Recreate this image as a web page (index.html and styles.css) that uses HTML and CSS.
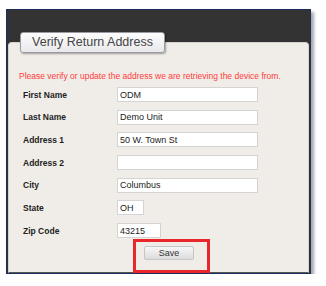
FILE: index.html
```html
<!DOCTYPE html>
<html lang="en">
<head>
    <meta charset="UTF-8">
    <meta name="viewport" content="width=device-width, initial-scale=1.0">
    <title>Verify Return Address</title>
    <link rel="stylesheet" href="styles.css">
</head>
<body>

<div class="frame">
    <div class="panel">
        <div class="tab">Verify Return Address</div>
        <p class="notice">Please verify or update the address we are retrieving the device from.</p>

        <div class="form">
            <label for="firstName">First Name</label>
            <input type="text" id="firstName" value="ODM" />

            <label for="lastName">Last Name</label>
            <input type="text" id="lastName" value="Demo Unit" />

            <label for="address1">Address 1</label>
            <input type="text" id="address1" value="50 W. Town St" />

            <label for="address2">Address 2</label>
            <input type="text" id="address2" value="" />

            <label for="city">City</label>
            <input type="text" id="city" value="Columbus" />

            <label for="state">State</label>
            <input type="text" id="state" class="short" value="OH" />

            <label for="zip">Zip Code</label>
            <input type="text" id="zip" class="medium" value="43215" />
        </div>

        <div class="highlight">
            <button class="save">Save</button>
        </div>
    </div>
</div>

</body>
</html>
```

FILE: styles.css
```css
body {
    margin: 0;
    background: #fff;
    font-family: "Liberation Sans", Arial, sans-serif;
}
.frame {
    margin: 9px 0 0 6px;
    width: 303px;
    height: 231px;
    background: #333;
    border: 1px solid #1c2d5e;
    box-shadow: 3px 3px 3px rgba(0, 0, 0, 0.35);
    padding-top: 32px;
}
.panel {
    margin: 0 1px;
    height: 229px;
    background: #f0ede8;
    border: 1px solid #d8d4cc;
    border-bottom-color: #555;
    border-radius: 4px 4px 0 0;
    padding: 0 10px;
}
.tab {
    margin: -11px 0 0 1px;
    width: 143px;
    height: 19px;
    line-height: 19px;
    text-align: center;
    font-size: 12.5px;
    color: #444;
    background: linear-gradient(#fdfdfd, #e9e9ec);
    border: 1px solid #9a9aa2;
    border-radius: 3px;
    box-shadow: 1px 1px 2px rgba(0, 0, 0, 0.35);
}
.notice {
    margin: 18px 0 0 0;
    font-size: 8.5px;
    line-height: 11px;
    color: #ff3b3b;
}
.form {
    display: grid;
    grid-template-columns: 94px 1fr;
    row-gap: 7.7px;
    align-items: center;
    margin: 5px 0 0 4px;
}
.form label {
    font-size: 8.5px;
    font-weight: bold;
    color: #222;
}
.form input {
    width: 141px;
    height: 15px;
    box-sizing: border-box;
    padding: 0 2px;
    border: 1px solid #d4d4d4;
    background: #fff;
    font-family: "Liberation Sans", Arial, sans-serif;
    font-size: 9px;
    color: #222;
}
.form input.short {
    width: 27px;
}
.form input.medium {
    width: 44px;
}
.highlight {
    margin: 1px 0 0 114px;
    width: 63px;
    height: 24px;
    border: 3px solid #e8262b;
    padding: 4px 0 0 8px;
}
.save {
    display: block;
    width: 50px;
    height: 14px;
    padding: 0;
    font-family: "Liberation Sans", Arial, sans-serif;
    font-size: 9px;
    color: #333;
    background: linear-gradient(#f7f7f7, #dcdcdc);
    border: 1px solid #c6c6c6;
    border-radius: 2px;
}
```
